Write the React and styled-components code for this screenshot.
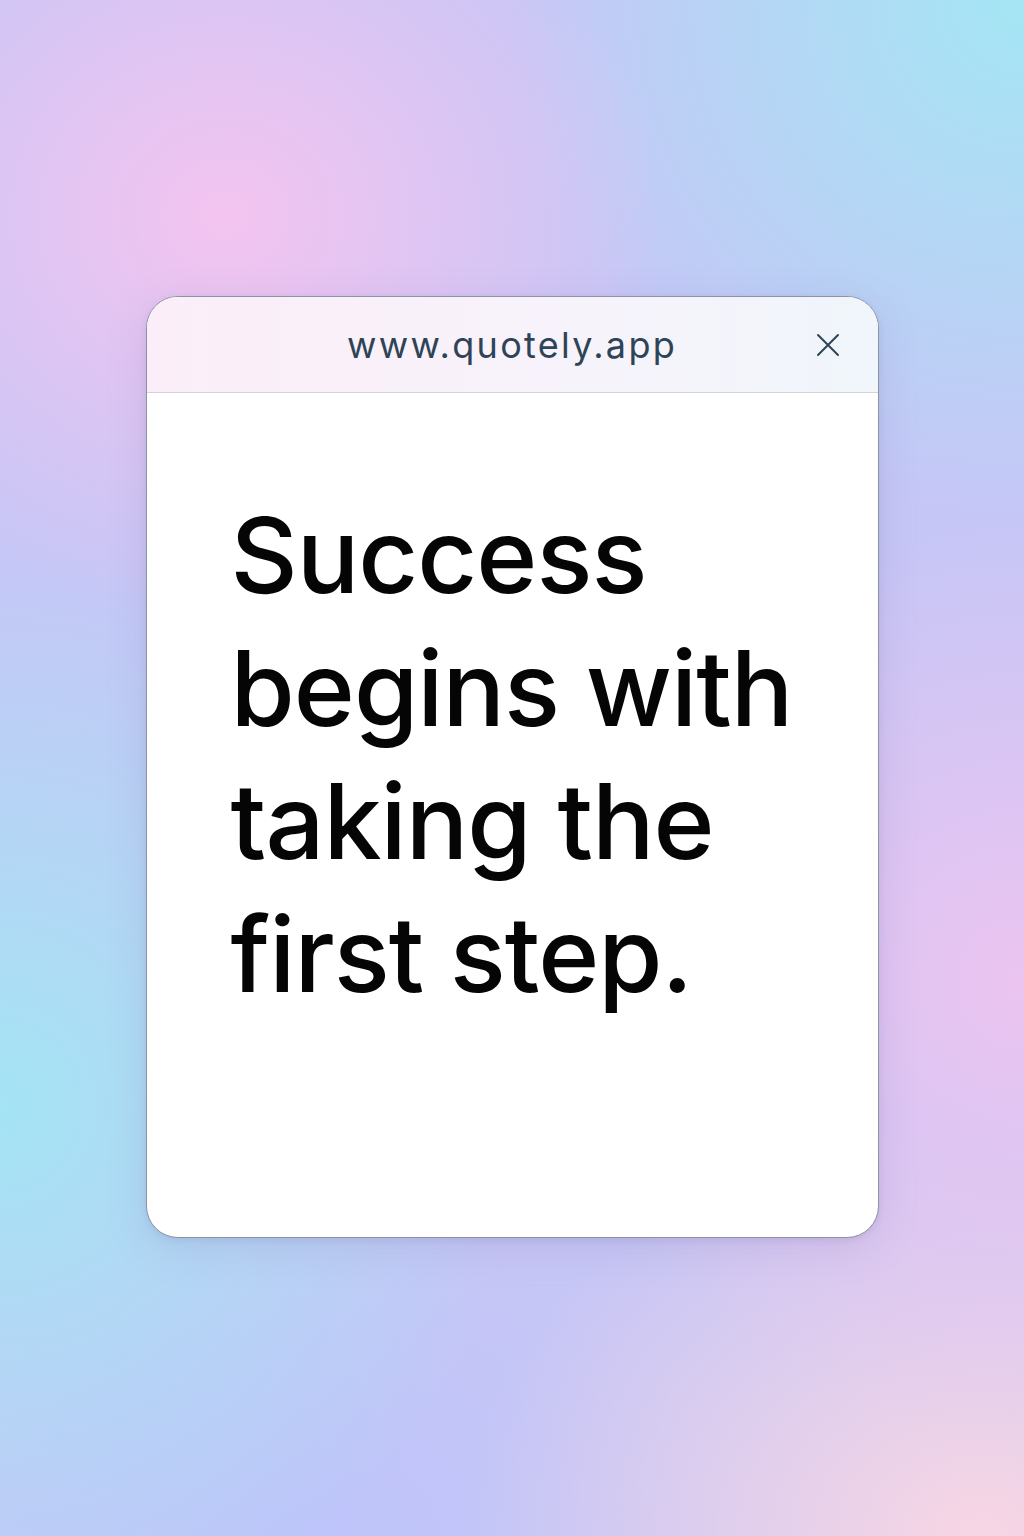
import React from "react";
import styled, { createGlobalStyle } from "styled-components";

const Global = createGlobalStyle`
  html, body { margin: 0; padding: 0; }
  body { font-family: "Inter", "Lato", sans-serif; }
  #root { min-height: 1536px; }
`;

const Page = styled.div`
  min-height: 1536px;
  display: flex;
  flex-direction: column;
  align-items: center;
  padding-top: 296px;
  box-sizing: border-box;
  background-color: #c6c6f6;
  background-image:
    radial-gradient(ellipse 440px 400px at 22% 14%, rgba(244, 196, 240, 1), rgba(244, 196, 240, 0) 100%),
    radial-gradient(ellipse 520px 520px at 100% 0%, rgba(164, 230, 244, 1), rgba(164, 230, 244, 0) 100%),
    radial-gradient(ellipse 520px 560px at 0% 72%, rgba(164, 228, 244, 1), rgba(164, 228, 244, 0) 100%),
    radial-gradient(ellipse 460px 460px at 100% 64%, rgba(238, 196, 240, 0.95), rgba(238, 196, 240, 0) 100%),
    radial-gradient(ellipse 520px 420px at 96% 100%, rgba(248, 214, 228, 1), rgba(248, 214, 228, 0) 100%),
    radial-gradient(ellipse 420px 300px at 30% 100%, rgba(190, 196, 250, 1), rgba(190, 196, 250, 0) 100%);
`;

const Card = styled.div`
  width: 733px;
  height: 942px;
  box-sizing: border-box;
  background: #ffffff;
  border: 1px solid #8a94a6;
  border-radius: 32px;
  overflow: hidden;
  display: flex;
  flex-direction: column;
  box-shadow: 0 10px 40px rgba(120, 110, 170, 0.18), 0 2px 6px rgba(90, 90, 130, 0.12);
`;

const Header = styled.div`
  height: 96px;
  flex: none;
  box-sizing: border-box;
  border-bottom: 1px solid #d2d4dc;
  background: linear-gradient(90deg, #fbeef8 0%, #f8f2fb 50%, #f0f6fb 100%);
  display: grid;
  grid-template-columns: 80px 1fr 80px;
  align-items: center;
`;

const Url = styled.div`
  grid-column: 2;
  text-align: center;
  font-family: "Inter", "Noto Sans", sans-serif;
  font-size: 36px;
  font-weight: 400;
  letter-spacing: 2.3px;
  color: #2e4456;
`;

const Close = styled.button`
  grid-column: 3;
  justify-self: start;
  margin-left: 10px;
  width: 40px;
  height: 40px;
  border: none;
  background: none;
  padding: 0;
  display: flex;
  align-items: center;
  justify-content: center;
  color: #2e4456;
  cursor: pointer;
`;

const Body = styled.div`
  flex: 1;
  padding: 96px 40px 0 84px;
`;

const Quote = styled.p`
  margin: 0;
  font-family: "Inter", sans-serif;
  font-weight: 500;
  font-size: 104px;
  line-height: 133px;
  color: #050505;
  letter-spacing: -1px;
`;

export default function App() {
  return (
    <>
      <Global />
      <Page>
        <Card>
          <Header>
            <Url>www.quotely.app</Url>
            <Close aria-label="Close">
              <svg width="24" height="24" viewBox="0 0 24 24" fill="none" stroke="currentColor" strokeWidth="2" strokeLinecap="round">
                <path d="M2 2 L22 22 M22 2 L2 22" />
              </svg>
            </Close>
          </Header>
          <Body>
            <Quote>
              Success
              <br />
              begins with
              <br />
              taking the
              <br />
              first step.
            </Quote>
          </Body>
        </Card>
      </Page>
    </>
  );
}
